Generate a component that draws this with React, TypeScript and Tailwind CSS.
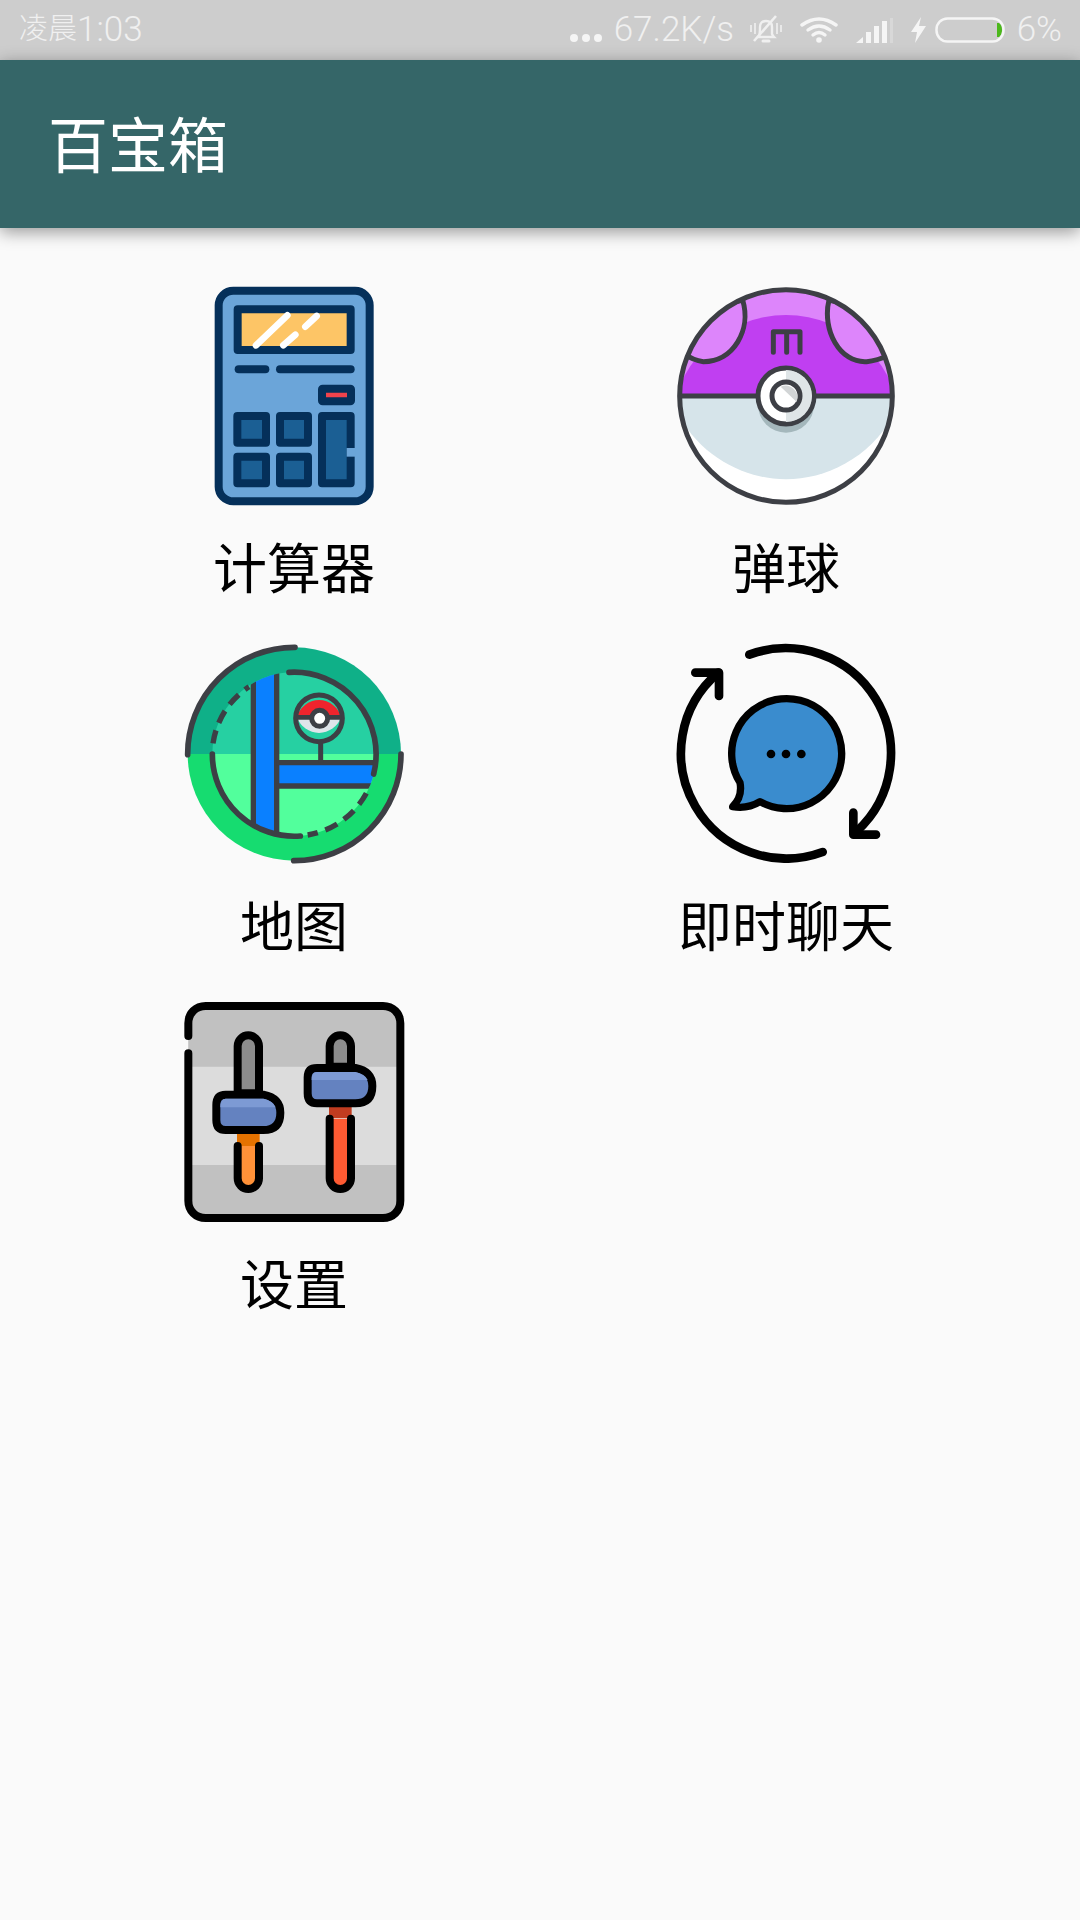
import React from 'react';

const dark = '#3d3f45';
const iconClass = 'w-[216px] h-[216px] blur-[0.6px] overflow-visible';

const CalculatorIcon = () => (
  <svg viewBox="-12 54 648 648" className={iconClass}>
    <rect x="86" y="62" width="453" height="632" rx="44" fill="#6ba5d9" stroke="#05305a" strokeWidth="24" />
    <rect x="143" y="118" width="339" height="122" fill="#fdc566" stroke="#05305a" strokeWidth="24" strokeLinejoin="round" />
    <g stroke="#ffffff" strokeWidth="20" strokeLinecap="round">
      <path d="M198 226 L292 136" />
      <path d="M346 170 L380 138" />
      <path d="M280 226 L316 194" />
    </g>
    <g stroke="#05305a" strokeWidth="24" strokeLinecap="round">
      <path d="M146 298 H226" />
      <path d="M270 298 H482" />
    </g>
    <rect x="396" y="356" width="87" height="38" rx="2" fill="#f0434c" stroke="#05305a" strokeWidth="24" strokeLinejoin="round" />
    <g fill="#1b5f94" stroke="#05305a" strokeWidth="24" strokeLinejoin="round">
      <rect x="142" y="438" width="86" height="80" />
      <rect x="270" y="438" width="84" height="80" />
      <rect x="142" y="560" width="86" height="80" />
      <rect x="270" y="560" width="84" height="80" />
      <rect x="396" y="438" width="86" height="202" />
    </g>
    <rect x="470" y="534" width="26" height="26" fill="#6ba5d9" />
  </svg>
);

const BallIcon = () => (
  <svg viewBox="54 54 648 648" className={iconClass}>
    <defs>
      <clipPath id="ball">
        <circle cx="378" cy="378" r="319" />
      </clipPath>
      <clipPath id="ballTop">
        <rect x="40" y="40" width="680" height="338" />
      </clipPath>
    </defs>
    <g clipPath="url(#ball)">
      <rect x="40" y="40" width="680" height="340" fill="#dd85fb" />
      <g clipPath="url(#ballTop)">
        <ellipse cx="378" cy="480" rx="345" ry="345" fill="#c03ff1" />
      </g>
      <rect x="40" y="378" width="680" height="340" fill="#ffffff" />
      <path d="M48 378 H708 V420 C640 560 500 628 378 628 C256 628 116 560 48 420 Z" fill="#d6e4ea" />
      <path d="M248 90 C275 180 220 275 130 275 Q100 272 70 250 L120 120 Z" fill="#dd85fb" stroke={dark} strokeWidth="15" />
      <path d="M507 90 C485 180 540 280 620 275 Q650 272 690 255 L640 120 Z" fill="#dd85fb" stroke={dark} strokeWidth="15" />
    </g>
    <circle cx="378" cy="378" r="319" fill="none" stroke={dark} strokeWidth="15" />
    <path d="M58 378 H698" stroke={dark} strokeWidth="15" />
    <path d="M340 247 V185 H420 V247 M380 185 V247" fill="none" stroke={dark} strokeWidth="15" strokeLinecap="round" strokeLinejoin="round" />
    <circle cx="378" cy="404" r="84" fill="#a4b7bc" />
    <circle cx="378" cy="378" r="84" fill="#ffffff" stroke={dark} strokeWidth="15" />
    <path d="M378 300 A78 78 0 0 1 378 456 Z" fill="#dfe5e7" />
    <circle cx="378" cy="378" r="42" fill="#ffffff" stroke={dark} strokeWidth="15" />
    <path d="M362 350 L410 396 A36 36 0 0 0 362 350 Z" fill="#d2d5d6" />
  </svg>
);

const MapIcon = () => (
  <svg viewBox="33 48 648 648" className={iconClass}>
    <defs>
      <clipPath id="inner">
        <circle cx="358" cy="372" r="246" />
      </clipPath>
    </defs>
    <path d="M38 372 A320 320 0 0 1 678 372 Z" fill="#0fb088" />
    <path d="M38 372 A320 320 0 0 0 678 372 Z" fill="#16dc70" />
    <g clipPath="url(#inner)">
      <rect x="100" y="110" width="520" height="262" fill="#26d0a2" />
      <rect x="100" y="372" width="520" height="262" fill="#52ff9c" />
      <rect x="235" y="110" width="70" height="520" fill="#0a80ff" />
      <rect x="305" y="398" width="320" height="70" fill="#0a80ff" />
      <g stroke={dark} strokeWidth="16" fill="none">
        <path d="M235 110 V630" />
        <path d="M305 110 V630" />
        <path d="M305 398 H625" />
        <path d="M305 468 H625" />
      </g>
    </g>
    <g fill="none" stroke={dark} strokeWidth="17" strokeLinecap="round">
      <path d="M38 374 A320 320 0 0 1 360 52" />
      <path d="M678 372 A320 320 0 0 1 356 692" />
      <path d="M342 127 A246 246 0 0 1 596 432" />
      <path d="M376 618 A246 246 0 0 1 112 372" />
    </g>
    <g fill="none" stroke={dark} strokeWidth="16" strokeLinecap="butt">
      <path d="M574 490 A246 246 0 0 1 398 615" strokeDasharray="40 24" />
      <path d="M114 340 A246 246 0 0 1 222 170" strokeDasharray="40 24" />
    </g>
    <path d="M437 335 V398" stroke={dark} strokeWidth="15" />
    <path d="M366 262 A68 68 0 0 1 498 262 Z" fill="#f0242d" />
    <path d="M366 262 A70 70 0 0 0 498 262 Z" fill="#dfe5ea" />
    <circle cx="432" cy="265" r="70" fill="none" stroke={dark} strokeWidth="15" />
    <path d="M364 262 H500" stroke={dark} strokeWidth="14" />
    <circle cx="434" cy="265" r="24" fill="#ffffff" stroke={dark} strokeWidth="15" />
  </svg>
);

const ChatIcon = () => (
  <svg viewBox="54 48 648 648" className={iconClass}>
    <path
      d="M240 458 A165 165 0 1 1 300 515 Q262 538 218 530 Q248 500 240 458 Z"
      fill="#3a8cce"
      stroke="#000000"
      strokeWidth="22"
      strokeLinejoin="round"
    />
    <circle cx="333" cy="372" r="13" fill="#000000" />
    <circle cx="378" cy="372" r="13" fill="#000000" />
    <circle cx="424" cy="372" r="13" fill="#000000" />
    <g fill="none" stroke="#000000" strokeWidth="26" strokeLinecap="round" strokeLinejoin="round">
      <path d="M268 74 A316 316 0 0 1 590 604" />
      <path d="M580 548 V614 H648" />
      <path d="M488 666 A316 316 0 0 1 175 128" />
      <path d="M106 128 H177 V198" />
    </g>
  </svg>
);

const SettingsIcon = () => (
  <svg viewBox="33 42 648 648" className={iconClass}>
    <rect x="40" y="48" width="636" height="636" rx="50" fill="#dcdcdc" />
    <path d="M40 230 V98 Q40 48 90 48 H626 Q676 48 676 98 V230 Z" fill="#c1c1c1" />
    <path d="M40 525 V634 Q40 684 90 684 H626 Q676 684 676 634 V525 Z" fill="#c1c1c1" />
    <path
      d="M40 138 V100 C40 70 62 48 92 48 H624 C654 48 676 70 676 100 V632 C676 662 654 684 624 684 H92 C62 684 40 662 40 632 V190"
      fill="none"
      stroke="#000000"
      strokeWidth="24"
      strokeLinecap="round"
    />
    <rect x="186" y="420" width="68" height="50" fill="#e57200" />
    <rect x="462" y="340" width="68" height="44" fill="#c13c20" />
    <g stroke="#000000" strokeWidth="24" strokeLinejoin="round" strokeLinecap="round">
      <path d="M188 310 V168 A32 32 0 0 1 252 168 V310 Z" fill="#8c8c8c" />
      <path d="M464 230 V168 A32 32 0 0 1 528 168 V230 Z" fill="#8c8c8c" />
      <path d="M188 468 V565 A32 32 0 0 0 252 565 V468" fill="#ff9138" />
      <path d="M464 386 V565 A32 32 0 0 0 528 565 V386" fill="#fe5a32" />
    </g>
    <path d="M124 345 Q124 314 152 314 H265 Q316 324 316 368 Q316 420 265 420 H152 Q124 420 124 390 Z" fill="#6482c0" stroke="#000000" strokeWidth="24" strokeLinejoin="round" />
    <path d="M136 352 Q136 326 152 326 H265 Q294 332 302 352 Z" fill="#7d9ad4" />
    <path d="M398 262 Q398 234 426 234 H541 Q592 244 592 288 Q592 340 541 340 H426 Q398 340 398 310 Z" fill="#6482c0" stroke="#000000" strokeWidth="24" strokeLinejoin="round" />
    <path d="M410 270 Q410 246 426 246 H541 Q570 252 578 270 Z" fill="#7d9ad4" />
  </svg>
);

const StatusBar = () => (
  <div className="h-[60px] bg-[#cdcdcd] flex items-center justify-between pl-[19px] pr-[18px] text-[#f0f0f0] font-['Roboto','Noto_Sans_CJK_SC',sans-serif] font-light text-[35px]">
    <div className="flex items-center">
      <span className="text-[29px]">凌晨</span>
      <span>1:03</span>
    </div>
    <div className="flex items-center">
      <svg viewBox="0 0 32 10" className="w-[32px] h-[10px] mt-[16px]" fill="#f5f5f5">
        <circle cx="4" cy="5" r="4" />
        <circle cx="16" cy="5" r="4" />
        <circle cx="28" cy="5" r="4" />
      </svg>
      <span className="ml-[12px] w-[118px]">67.2K/s</span>
      <svg viewBox="0 0 34 30" className="ml-[17px] w-[34px] h-[30px]" fill="none" stroke="#f0f0f0" strokeWidth="2.4">
        <path d="M10 21 Q11 19 11 12 Q11 6 17 6 Q23 6 23 12 V19 Q24 21 25 22 H9 Z" />
        <path d="M14 26 H20" strokeWidth="3" strokeLinecap="round" />
        <path d="M5 26 L27 1" strokeWidth="2.6" />
        <path d="M2 10 V17 M6 8 V19 M28 8 V19 M32 10 V17" strokeWidth="1.6" />
      </svg>
      <svg viewBox="0 0 38 26" className="ml-[17px] w-[38px] h-[26px]" fill="none" stroke="#f5f5f5" strokeWidth="3.4" strokeLinecap="round">
        <path d="M2 8 Q19 -4 36 8" />
        <path d="M8 13 Q19 5 30 13" />
        <path d="M13 18 Q19 13 25 18" />
        <circle cx="19" cy="23" r="2.8" fill="#f5f5f5" stroke="none" />
      </svg>
      <svg viewBox="0 0 37 25" className="ml-[18px] w-[37px] h-[25px]">
        <path d="M0 25 L7 19 V25 Z" fill="#f5f5f5" />
        <rect x="10" y="14" width="5" height="11" fill="#f5f5f5" />
        <rect x="18" y="8" width="5" height="17" fill="#f5f5f5" />
        <rect x="26" y="3" width="5" height="22" fill="#f5f5f5" />
        <rect x="34" y="0" width="3" height="25" fill="#d8d8d8" />
      </svg>
      <svg viewBox="0 0 17 26" className="ml-[17px] w-[17px] h-[26px]" fill="#f5f5f5">
        <path d="M11 0 L1 15 H7 L5 26 L16 9 H9 Z" />
      </svg>
      <svg viewBox="0 0 72 26" className="ml-[8px] w-[72px] h-[26px]" fill="none">
        <path d="M62 6 H64 Q67 8 67 13 Q67 18 64 20 H62 Z" fill="#4cb81c" />
        <rect x="1.5" y="1.5" width="67" height="23" rx="11" stroke="#f5f5f5" strokeWidth="2.5" />
      </svg>
      <span className="ml-[10px]">6%</span>
    </div>
  </div>
);

const tools = [
  { label: '计算器', icon: <CalculatorIcon /> },
  { label: '弹球', icon: <BallIcon /> },
  { label: '地图', icon: <MapIcon /> },
  { label: '即时聊天', icon: <ChatIcon /> },
  { label: '设置', icon: <SettingsIcon /> },
];

export default function App() {
  return (
    <div className="w-[1080px] h-[1920px] bg-[#fafafa] flex flex-col font-['Noto_Sans_CJK_SC',sans-serif]">
      <StatusBar />
      <div className="h-[168px] bg-[#356668] flex items-center pl-[48px] shadow-[0_4px_16px_rgba(0,0,0,0.4)]">
        <h1 className="text-[60px] text-white font-normal leading-none mb-[5px]">百宝箱</h1>
      </div>
      <div className="grid grid-cols-2 gap-y-[42px] px-[48px] pt-[60px]">
        {tools.map(tool => (
          <div key={tool.label} className="flex flex-col items-center">
            {tool.icon}
            <span className="mt-[24px] text-[54px] leading-[76px] text-black">{tool.label}</span>
          </div>
        ))}
      </div>
    </div>
  );
}
